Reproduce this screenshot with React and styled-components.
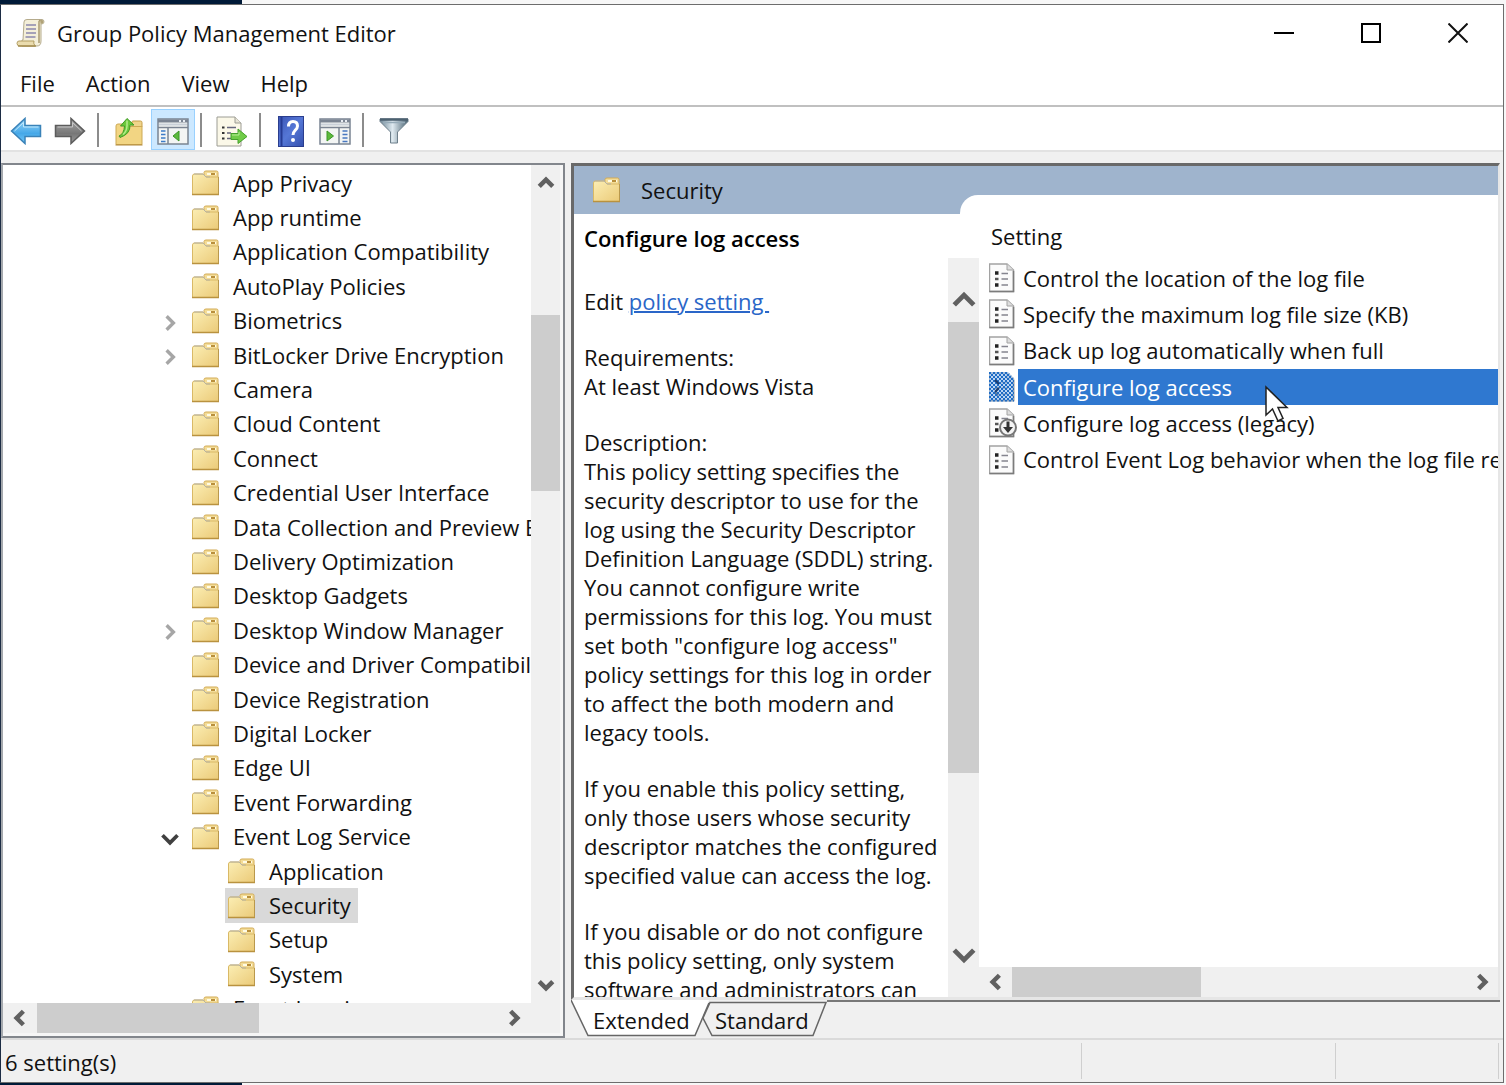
import React from "react";
import styled, { createGlobalStyle, css } from "styled-components";

const GlobalStyle = createGlobalStyle`
  *, *::before, *::after { box-sizing: border-box; }
  body {
    margin: 0;
    overflow: hidden;
    font-family: "Open Sans", "Noto Sans", sans-serif;
    font-size: 22px;
    line-height: 29px;
    color: #111;
  }
  button {
    font: inherit;
    color: inherit;
    background: none;
    border: 0;
    padding: 0;
    text-align: left;
  }
  ul { list-style: none; margin: 0; padding: 0; }
  svg { display: block; flex: none; }
`;

/* ---------- frame ---------- */

const Desktop = styled.div`
  display: flex;
  height: 100vh;
  padding: 4px 2px 2px 0;
  background: linear-gradient(90deg, #001a38 242px, #f7f7f7 242px);
`;

const Window = styled.div`
  flex: 1;
  min-width: 0;
  display: flex;
  flex-direction: column;
  background: #f0f0f0;
  border: 1px solid #6d6d6d;
  border-left-color: #1c2c44;
`;

const TitleBar = styled.header`
  display: flex;
  align-items: center;
  height: 56px;
  padding: 0 2px 0 15px;
  background: #fff;
`;

const Title = styled.h1`
  flex: 1;
  margin: 0 0 0 12px;
  font-size: 22px;
  font-weight: 400;
`;

const CaptionButton = styled.button`
  display: grid;
  place-items: center;
  width: 87px;
  height: 56px;
`;

const MenuBar = styled.nav`
  display: flex;
  align-items: center;
  gap: 31px;
  height: 46px;
  padding-left: 19px;
  background: #fff;
  border-bottom: 2px solid #c0c0c0;
`;

const ToolBar = styled.div`
  display: flex;
  align-items: center;
  height: 45px;
  padding: 2px 0 0 3px;
  background: #fff;
  border-bottom: 2px solid #e2e2e2;
`;

const ToolButton = styled.button`
  display: grid;
  place-items: center;
  width: 44px;
  height: 41px;
  padding-top: 3px;
  ${(p) =>
    p.$active &&
    css`
      background: #cce8ff;
      border: 1px solid #99d1ff;
    `}
`;

const ToolSeparator = styled.span`
  width: 2px;
  height: 34px;
  margin: 0 8px 0 5px;
  background: #8c8c8c;
`;

const Panes = styled.main`
  flex: 1;
  min-height: 0;
  display: flex;
  gap: 6px;
  padding: 11px 3px 0 0;
`;

/* ---------- scroll bars ---------- */

const ScrollTrack = styled.div`
  display: flex;
  flex: none;
  flex-direction: ${(p) => (p.$horizontal ? "row" : "column")};
  ${(p) => (p.$horizontal ? "height" : "width")}: ${(p) => p.$size}px;
  padding: ${(p) => p.$inset || 0}px 0;
  background: #f0f0f0;
`;

const ScrollArrow = styled.button`
  display: grid;
  place-items: center;
  flex: 0 0 ${(p) => p.$length}px;
`;

const ScrollSpace = styled.div`
  flex: ${(p) => p.$grow} 1 0;
`;

const ScrollThumb = styled.div`
  flex: ${(p) => p.$grow} 1 0;
  background: #cdcdcd;
`;

/* ---------- tree ---------- */

const TreePane = styled.section`
  flex: 0 0 564px;
  min-width: 0;
  display: flex;
  flex-direction: column;
  background: #f6f6f6;
  border: 2px solid #82868c;
  border-left-color: #a5a9ae;
  padding-bottom: 3px;
  padding-right: 3px;
`;

const TreeBody = styled.div`
  flex: 1;
  min-height: 0;
  display: flex;
`;

const TreeFoot = styled.div`
  display: flow-root;
  padding-right: 29px;
  background: #f0f0f0;
`;

const TreeViewport = styled.div`
  flex: 1;
  min-width: 0;
  overflow: hidden;
  padding-top: 1px;
  background: #fff;
`;

const TreeList = styled.ul`
  display: grid;
  grid-auto-rows: minmax(0, 1fr);
  height: 860px;
`;

const TreeRow = styled.li`
  display: flex;
  padding-left: ${(p) => 154 + p.$level * 36}px;
`;

const Expander = styled.span`
  display: grid;
  place-items: center;
  flex: 0 0 26px;
  margin-right: 6px;
  padding-top: 4px;
`;

const TreeItem = styled.button`
  display: flex;
  align-items: center;
  gap: 14px;
  padding: 0 7px 0 3px;
  white-space: nowrap;
  background: ${(p) => (p.$selected ? "#d9d9d9" : "transparent")};
`;

/* ---------- details ---------- */

const RightSide = styled.section`
  flex: 1;
  min-width: 0;
  display: flex;
  flex-direction: column;
`;

const DetailPane = styled.div`
  flex: 1;
  min-height: 0;
  display: flex;
  flex-direction: column;
  background: #fff;
  border: solid #696969;
  border-width: 3px 0 0 3px;
  border-right: 2px solid #e6e6e6;
  border-bottom: 3px solid #e6e6e6;
`;

const DetailHeader = styled.div`
  display: flex;
  height: 48px;
  background: #9fb4cd;
`;

const DetailTitle = styled.h2`
  display: flex;
  align-items: center;
  gap: 21px;
  flex: 0 0 386px;
  margin: 0;
  padding-left: 19px;
  font-size: 22px;
  font-weight: 400;
`;

const Shoulder = styled.div`
  flex: 1;
  margin-top: 29px;
  border-top-left-radius: 18px;
  background: #fff;
`;

const DetailBody = styled.div`
  flex: 1;
  min-height: 0;
  display: flex;
`;

const Description = styled.article`
  flex: 0 0 405px;
  min-width: 0;
  display: flex;
  flex-direction: column;
`;

const DescriptionTitle = styled.h3`
  margin: 0;
  padding: 10px 10px 5px;
  font-size: 22px;
  font-weight: 600;
  color: #000;
`;

const DescriptionBody = styled.div`
  flex: 1;
  min-height: 0;
  display: flex;
`;

const DescriptionText = styled.div`
  flex: 1;
  min-width: 0;
  overflow: hidden;
  padding: 29px 0 0 10px;
  white-space: pre;
`;

const Paragraph = styled.p`
  margin: 0 0 27px;
`;

const PolicyLink = styled.a`
  color: #2a66c8;
  text-decoration: underline;
  text-decoration-thickness: 2px;
`;

const Settings = styled.div`
  flex: 1;
  min-width: 0;
  display: flex;
  flex-direction: column;
`;

const ColumnHeader = styled.div`
  height: 46px;
  padding: 8px 12px;
`;

const SettingsViewport = styled.div`
  flex: 1;
  min-height: 0;
  overflow: hidden;
`;

const SettingsList = styled.ul`
  display: grid;
  grid-auto-rows: minmax(0, 1fr);
  height: 218px;
`;

const SettingRow = styled.li`
  display: flex;
  align-items: center;
  gap: 1px;
  padding-left: 10px;
`;

const SettingName = styled.button`
  position: relative;
  align-self: stretch;
  flex: 1;
  min-width: 0;
  padding-left: 5px;
  white-space: nowrap;
  color: ${(p) => (p.$selected ? "#fff" : "inherit")};
  background: ${(p) => (p.$selected ? "#2f78d0" : "transparent")};
`;

const Pointer = styled.svg`
  position: absolute;
  z-index: 1;
  left: 246px;
  top: 16px;
  pointer-events: none;
`;

/* ---------- tabs and status ---------- */

const TabStrip = styled.div`
  display: flex;
  height: 38px;
`;

const TabFill = styled.span`
  flex: 1;
  border-top: 2px solid #787878;
`;

const Tab = styled.button`
  position: relative;
  width: ${(p) => p.$width}px;
  height: 37px;
  padding: 3px 0 0 ${(p) => p.$indent}px;
  white-space: nowrap;
`;

const TabShape = styled.svg`
  position: absolute;
  left: 0;
  top: 0;
`;

const TabText = styled.span`
  position: relative;
`;

const StatusBar = styled.footer`
  display: flex;
  height: 44px;
  padding: 3px 4px 3px 0;
  border-top: 2px solid #dadada;
`;

const StatusCell = styled.div`
  flex: ${(p) => (p.$width ? `0 0 ${p.$width}px` : "1")};
  padding: 5px 4px;
  border-right: 1px solid #cfcfcf;
`;

/* ---------- drawings ---------- */

function Chevron({ direction = "down", size = 16, weight = 3, color = "#606060" }) {
  const points = {
    up: "2,11 8,5 14,11",
    down: "2,5 8,11 14,5",
    left: "11,2 5,8 11,14",
    right: "5,2 11,8 5,14",
  };
  return (
    <svg width={size} height={size} viewBox="0 0 16 16" aria-hidden="true">
      <polyline points={points[direction]} fill="none" stroke={color} strokeWidth={weight} />
    </svg>
  );
}

function FolderIcon() {
  return (
    <svg width="27" height="26" viewBox="0 0 27 26" aria-hidden="true">
      <defs>
        <linearGradient id="folderFace" x1="0" y1="0" x2="1" y2="1">
          <stop offset="0" stopColor="#fbeeb4" />
          <stop offset="1" stopColor="#ebca78" />
        </linearGradient>
      </defs>
      <path d="M12 6V2.500Q12 1 14 1H24.500Q26 1 26 2.500V8H12Z" fill="#f3dc98" stroke="#d3ab55" />
      <path d="M15 4H24" stroke="#fffbe4" strokeWidth="2" />
      <path d="M19 4H23" stroke="#b98f3c" strokeWidth="2" />
      <path d="M0.500 24.500V6Q0.500 4 2.500 4H11L14 7H26.500V24.500Z" fill="url(#folderFace)" stroke="#d9b966" />
      <path d="M2 4H11L14 7H18" fill="none" stroke="#b4b1a4" />
      <path d="M0 24.500H27" stroke="#b9923f" strokeWidth="1.500" />
      <path d="M26.500 7V24" stroke="#b9984c" />
    </svg>
  );
}

function ScrollIcon() {
  return (
    <svg width="29" height="30" viewBox="0 0 29 30" aria-hidden="true">
      <path d="M8 4Q8 1.500 11 1.500H26Q28 1.500 28 4Q28 6 25 6V23Q25 28 21 28H6V22H7Z" fill="#f4efd9" stroke="#b5ab8c" />
      <path d="M24 2Q22.500 3 23 6V25" fill="none" stroke="#a99b70" strokeWidth="1.500" />
      <path d="M24 2H26.500Q28 3 27 5L24.500 6Z" fill="#b0a277" />
      <path d="M10 7H20M10 11H20M10 15H20M9.500 19H19.500" stroke="#8a88ad" strokeWidth="1.500" />
      <path d="M3 23H18Q17 25 19 28H4Q1 28 1 25.500Q1 23 3 23Z" fill="#eadcae" stroke="#b39e63" />
      <path d="M2 28H20" stroke="#a68f52" strokeWidth="1.500" />
    </svg>
  );
}

function ArrowIcon({ forward }) {
  const id = forward ? "arrowForward" : "arrowBack";
  return (
    <svg width="32" height="28" viewBox="0 0 32 28" aria-hidden="true">
      <defs>
        <linearGradient id={id} x1="0" y1="0" x2="0" y2="1">
          <stop offset="0" stopColor={forward ? "#a9a9a9" : "#9bd8fa"} />
          <stop offset="0.600" stopColor={forward ? "#777" : "#46a8e8"} />
          <stop offset="1" stopColor={forward ? "#999" : "#72c8f8"} />
        </linearGradient>
      </defs>
      <path
        transform={forward ? "translate(32 0) scale(-1 1)" : undefined}
        d="M1.500 14L15 1.500V8.500H30.500V19.500H15V26.500Z"
        fill={`url(#${id})`}
        stroke={forward ? "#5c5c5c" : "#3a82b8"}
        strokeWidth="1.500"
      />
      <path
        transform={forward ? "translate(32 0) scale(-1 1)" : undefined}
        d="M4.500 14L13.500 5.500V10H28.500"
        fill="none"
        stroke={forward ? "#c6c6c6" : "#c0e8fc"}
        strokeWidth="1"
      />
    </svg>
  );
}

function FolderUpIcon() {
  return (
    <svg width="28" height="29" viewBox="0 0 28 29" aria-hidden="true">
      <path d="M17 8V5Q17 4 18 4H25.500Q27 4 27 5.500V10H17Z" fill="#efd48b" stroke="#c79f48" />
      <path d="M1 27.500V9Q1 7 3 7H11L14 9.500H27V27.500Z" fill="#f2d583" stroke="#cda955" />
      <path d="M0.500 28H27.500" stroke="#b0883a" />
      <path d="M4 19Q9 17 9.500 9H5.500L12 1.500L19 8H15Q15.500 17 5 20.500Z" fill="#6cc93c" stroke="#3f9a25" />
      <path d="M12 3.500V9Q11.500 15 8 17.500" fill="none" stroke="#b4ec8c" strokeWidth="1.500" />
    </svg>
  );
}

function ConsoleIcon({ mirrored }) {
  return (
    <svg width="32" height="27" viewBox="0 0 32 27" aria-hidden="true">
      <rect x="1" y="1" width="30" height="25" fill="#f3f5f4" stroke="#7a8492" strokeWidth="1.500" />
      <path d="M1 3H31" stroke="#7a8492" strokeWidth="3" />
      <path d="M22 3H24M26 3H28" stroke="#e8edf3" strokeWidth="2" />
      <path d="M2 6.500H30" stroke="#c9d0d8" strokeWidth="2" />
      <path d="M1 9.500H31" stroke="#7a8492" strokeWidth="1.500" />
      {mirrored ? (
        <>
          <path d="M20 10V26" stroke="#7a8492" strokeWidth="1.500" />
          <path d="M23.500 13H28.500M23.500 16.500H28.500M23.500 20H28.500M23.500 23.500H28.500" stroke="#4878c0" strokeWidth="1.500" />
          <path d="M8 13L14.500 18L8 23Z" fill="#5cba3c" stroke="#3b9527" />
        </>
      ) : (
        <>
          <path d="M11 10V26" stroke="#7a8492" strokeWidth="1.500" />
          <path d="M4 13H8.500M4 16.500H8.500M4 20H8.500M4 23.500H8.500" stroke="#3c7cc8" strokeWidth="1.500" />
          <path d="M22 13V23L16 18Z" fill="#5cba3c" stroke="#3b9527" />
        </>
      )}
    </svg>
  );
}

function ExportIcon() {
  return (
    <svg width="32" height="31" viewBox="0 0 32 31" aria-hidden="true">
      <path d="M1 1H19L25 7V30H1Z" fill="#fbf8e8" stroke="#9c9c94" />
      <path d="M19 1V7H25" fill="#e7e4d6" stroke="#9c9c94" />
      <path d="M6 11.500H8.500M6 17H8.500M6 22.500H8.500" stroke="#333" strokeWidth="2" />
      <path d="M11 11.500H20M11 17H15M11 22.500H15" stroke="#66667e" strokeWidth="1.500" />
      <path d="M15 17.500H22V13L31 20.500L22 27.500V23.500H15Z" fill="#70cc48" stroke="#45a02c" />
      <path d="M16 19H23V16" fill="none" stroke="#b6ec94" />
    </svg>
  );
}

function HelpIcon() {
  return (
    <svg width="26" height="31" viewBox="0 0 26 31" aria-hidden="true">
      <defs>
        <linearGradient id="helpFace" x1="0" y1="0" x2="1" y2="1">
          <stop offset="0" stopColor="#3b55b5" />
          <stop offset="0.500" stopColor="#5577d6" />
          <stop offset="1" stopColor="#3450ae" />
        </linearGradient>
      </defs>
      <rect x="0.500" y="0.500" width="25" height="30" fill="url(#helpFace)" stroke="#2b3e8e" />
      <path d="M3.500 1V30" stroke="#263c94" strokeWidth="2" />
      <path d="M10.500 10.500Q10.500 5.500 15 5.500Q19.500 5.500 19.500 10Q19.500 12.500 17 14.500Q15 16.500 15 19" fill="none" stroke="#fff" strokeWidth="3" />
      <circle cx="15" cy="24" r="2" fill="#fff" />
    </svg>
  );
}

function FunnelIcon() {
  return (
    <svg width="30" height="28" viewBox="0 0 30 28" aria-hidden="true">
      <defs>
        <linearGradient id="funnelFace" x1="0" y1="0" x2="1" y2="0">
          <stop offset="0" stopColor="#6f8796" />
          <stop offset="0.450" stopColor="#dfeaf0" />
          <stop offset="1" stopColor="#47606f" />
        </linearGradient>
      </defs>
      <path d="M1 2H29V4.500L18.500 15V26H11.500V15L1 4.500Z" fill="url(#funnelFace)" stroke="#6d7f8b" />
      <path d="M1 2.500H29" stroke="#4c6170" strokeWidth="2.500" />
      <path d="M4 5.500H26" stroke="#96abb8" strokeWidth="1.500" />
    </svg>
  );
}

function PolicyIcon({ selected, legacy }) {
  return (
    <svg width="28" height="30" viewBox="0 0 28 30" aria-hidden="true">
      <defs>
        <pattern id="selectedDither" width="4" height="4" patternUnits="userSpaceOnUse">
          <path d="M0 0h2v2H0zM2 2h2v2H2z" fill="#1f6cc4" />
        </pattern>
      </defs>
      <path d="M0.500 1H18L24.500 7V28.500H0.500Z" fill="#fbfbfb" stroke="#a2a2a2" strokeWidth="1.500" />
      <path d="M0.500 28.500H24.500V8" fill="none" stroke="#7c7c7c" strokeWidth="1.500" />
      <path d="M18 1V7H24.500" fill="#ddd" stroke="#a2a2a2" />
      <path d="M6 10H9.500M6 22H9.500" stroke="#222" strokeWidth="3.500" />
      <path d="M6 16H9.500" stroke="#555" strokeWidth="2.500" />
      <path d="M12.500 10.500H19M12.500 16H19M12.500 22H19" stroke="#85858f" strokeWidth="1.500" />
      {selected && <path d="M0 0H19L25 6.500V29.500H0Z" fill="#8fbdf0" opacity="0.600" />}
      {selected && <path d="M0 0H19L25 6.500V29.500H0Z" fill="url(#selectedDither)" />}
      {selected && <path d="M6 8L10 12M6 20L10 16" stroke="#1a3c70" strokeWidth="2" />}
      {legacy && (
        <>
          <circle cx="19" cy="19.500" r="8" fill="#f4f4f4" stroke="#777" strokeWidth="2" />
          <path d="M19 13.500V22" stroke="#333" strokeWidth="3" />
          <path d="M14 19H24L19 25Z" fill="#333" />
        </>
      )}
    </svg>
  );
}

function ScrollBar({ horizontal, size, arrow, before, thumb, after, inset, chevronSize = 18, weight = 4 }) {
  return (
    <ScrollTrack $horizontal={horizontal} $size={size} $inset={inset}>
      <ScrollArrow $length={arrow} aria-label={horizontal ? "Scroll left" : "Scroll up"}>
        <Chevron direction={horizontal ? "left" : "up"} size={chevronSize} weight={weight} />
      </ScrollArrow>
      <ScrollSpace $grow={before} />
      <ScrollThumb $grow={thumb} />
      <ScrollSpace $grow={after} />
      <ScrollArrow $length={arrow} aria-label={horizontal ? "Scroll right" : "Scroll down"}>
        <Chevron direction={horizontal ? "right" : "down"} size={chevronSize} weight={weight} />
      </ScrollArrow>
    </ScrollTrack>
  );
}

/* ---------- data ---------- */

const tree = [
  { name: "App Privacy" },
  { name: "App runtime" },
  { name: "Application Compatibility" },
  { name: "AutoPlay Policies" },
  { name: "Biometrics", state: "closed" },
  { name: "BitLocker Drive Encryption", state: "closed" },
  { name: "Camera" },
  { name: "Cloud Content" },
  { name: "Connect" },
  { name: "Credential User Interface" },
  { name: "Data Collection and Preview Builds" },
  { name: "Delivery Optimization" },
  { name: "Desktop Gadgets" },
  { name: "Desktop Window Manager", state: "closed" },
  { name: "Device and Driver Compatibility" },
  { name: "Device Registration" },
  { name: "Digital Locker" },
  { name: "Edge UI" },
  { name: "Event Forwarding" },
  { name: "Event Log Service", state: "open" },
  { name: "Application", level: 1 },
  { name: "Security", level: 1, selected: true },
  { name: "Setup", level: 1 },
  { name: "System", level: 1 },
  { name: "Event Logging" },
];

const settings = [
  { name: "Control the location of the log file" },
  { name: "Specify the maximum log file size (KB)" },
  { name: "Back up log automatically when full" },
  { name: "Configure log access", selected: true },
  { name: "Configure log access (legacy)", legacy: true },
  { name: "Control Event Log behavior when the log file reaches its maximum size" },
];

const paragraphs = [
  "Requirements:\nAt least Windows Vista",
  'Description:\nThis policy setting specifies the\nsecurity descriptor to use for the\nlog using the Security Descriptor\nDefinition Language (SDDL) string.\nYou cannot configure write\npermissions for this log. You must\nset both "configure log access"\npolicy settings for this log in order\nto affect the both modern and\nlegacy tools.',
  "If you enable this policy setting,\nonly those users whose security\ndescriptor matches the configured\nspecified value can access the log.",
  "If you disable or do not configure\nthis policy setting, only system\nsoftware and administrators can",
];

export default function App() {
  return (
    <Desktop>
      <GlobalStyle />
      <Window>
        <TitleBar>
          <ScrollIcon />
          <Title>Group Policy Management Editor</Title>
          <CaptionButton aria-label="Minimize">
            <svg width="20" height="20" viewBox="0 0 20 20"><path d="M0 10H20" stroke="#000" strokeWidth="2" /></svg>
          </CaptionButton>
          <CaptionButton aria-label="Maximize">
            <svg width="20" height="20" viewBox="0 0 20 20"><rect x="1" y="1" width="18" height="18" fill="none" stroke="#000" strokeWidth="2" /></svg>
          </CaptionButton>
          <CaptionButton aria-label="Close">
            <svg width="20" height="20" viewBox="0 0 20 20"><path d="M0.500 0.500L19.500 19.500M19.500 0.500L0.500 19.500" stroke="#111" strokeWidth="2" /></svg>
          </CaptionButton>
        </TitleBar>

        <MenuBar>
          {["File", "Action", "View", "Help"].map((name) => (
            <button key={name}>{name}</button>
          ))}
        </MenuBar>

        <ToolBar>
          <ToolButton aria-label="Back"><ArrowIcon /></ToolButton>
          <ToolButton aria-label="Forward"><ArrowIcon forward /></ToolButton>
          <ToolSeparator />
          <ToolButton aria-label="Up one level"><FolderUpIcon /></ToolButton>
          <ToolButton aria-label="Show or hide console tree" $active><ConsoleIcon /></ToolButton>
          <ToolSeparator />
          <ToolButton aria-label="Export list"><ExportIcon /></ToolButton>
          <ToolSeparator />
          <ToolButton aria-label="Help"><HelpIcon /></ToolButton>
          <ToolButton aria-label="Show or hide action pane"><ConsoleIcon mirrored /></ToolButton>
          <ToolSeparator />
          <ToolButton aria-label="Filter"><FunnelIcon /></ToolButton>
        </ToolBar>

        <Panes>
          <TreePane>
            <TreeBody>
              <TreeViewport>
                <TreeList>
                  {tree.map((node) => (
                    <TreeRow key={node.name} $level={node.level || 0}>
                      <Expander>
                        {node.state === "closed" && <Chevron direction="right" size={18} color="#a6a6a6" />}
                        {node.state === "open" && <Chevron direction="down" size={20} color="#404040" />}
                      </Expander>
                      <TreeItem $selected={node.selected}>
                        <FolderIcon />
                        {node.name}
                      </TreeItem>
                    </TreeRow>
                  ))}
                </TreeList>
              </TreeViewport>
              <ScrollBar size={29} arrow={35} before={115} thumb={176} after={478} />
            </TreeBody>
            <TreeFoot>
              <ScrollBar horizontal size={30} arrow={34} before={0} thumb={222} after={238} />
            </TreeFoot>
          </TreePane>

          <RightSide>
            <DetailPane>
              <DetailHeader>
                <DetailTitle>
                  <FolderIcon />
                  Security
                </DetailTitle>
                <Shoulder />
              </DetailHeader>
              <DetailBody>
                <Description>
                  <DescriptionTitle>Configure log access</DescriptionTitle>
                  <DescriptionBody>
                    <DescriptionText>
                      <Paragraph>Edit <PolicyLink href="#policy">policy setting </PolicyLink></Paragraph>
                      {paragraphs.map((text) => (
                        <Paragraph key={text}>{text}</Paragraph>
                      ))}
                    </DescriptionText>
                    <ScrollBar size={31} inset={20} arrow={44} before={0} thumb={450} after={160} chevronSize={26} weight={3} />
                  </DescriptionBody>
                </Description>
                <Settings>
                  <ColumnHeader>Setting</ColumnHeader>
                  <SettingsViewport>
                    <SettingsList>
                      {settings.map((item) => (
                        <SettingRow key={item.name}>
                          <PolicyIcon selected={item.selected} legacy={item.legacy} />
                          <SettingName $selected={item.selected}>
                            {item.name}
                            {item.selected && (
                              <Pointer width="26" height="38" viewBox="0 0 26 38" aria-hidden="true">
                                <path d="M2 2V30L8.500 24L14 36L19 33.500L14 22.500H23Z" fill="#fff" stroke="#222" strokeWidth="1.500" />
                              </Pointer>
                            )}
                          </SettingName>
                        </SettingRow>
                      ))}
                    </SettingsList>
                  </SettingsViewport>
                  <ScrollBar horizontal size={30} arrow={33} before={0} thumb={189} after={263} />
                </Settings>
              </DetailBody>
            </DetailPane>
            <TabStrip>
              <Tab $width={132} $indent={22}>
                <TabShape width="140" height="37" viewBox="0 0 140 37" aria-hidden="true">
                  <path d="M0 0L17 35.500H124L138 0Z" fill="#fff" />
                  <path d="M0 0L17 35.500H124L138 3" fill="none" stroke="#666" strokeWidth="1.500" />
                </TabShape>
                <TabText>Extended</TabText>
              </Tab>
              <Tab $width={124} $indent={12}>
                <TabShape width="124" height="37" viewBox="0 0 124 37" aria-hidden="true">
                  <path d="M7 2.500H123L110 35.500H9L0 18Z" fill="#f0f0f0" stroke="#666" strokeWidth="1.500" />
                </TabShape>
                <TabText>Standard</TabText>
              </Tab>
              <TabFill />
            </TabStrip>
          </RightSide>
        </Panes>

        <StatusBar>
          <StatusCell>6 setting(s)</StatusCell>
          <StatusCell $width={254} />
          <StatusCell $width={163} />
        </StatusBar>
      </Window>
    </Desktop>
  );
}
